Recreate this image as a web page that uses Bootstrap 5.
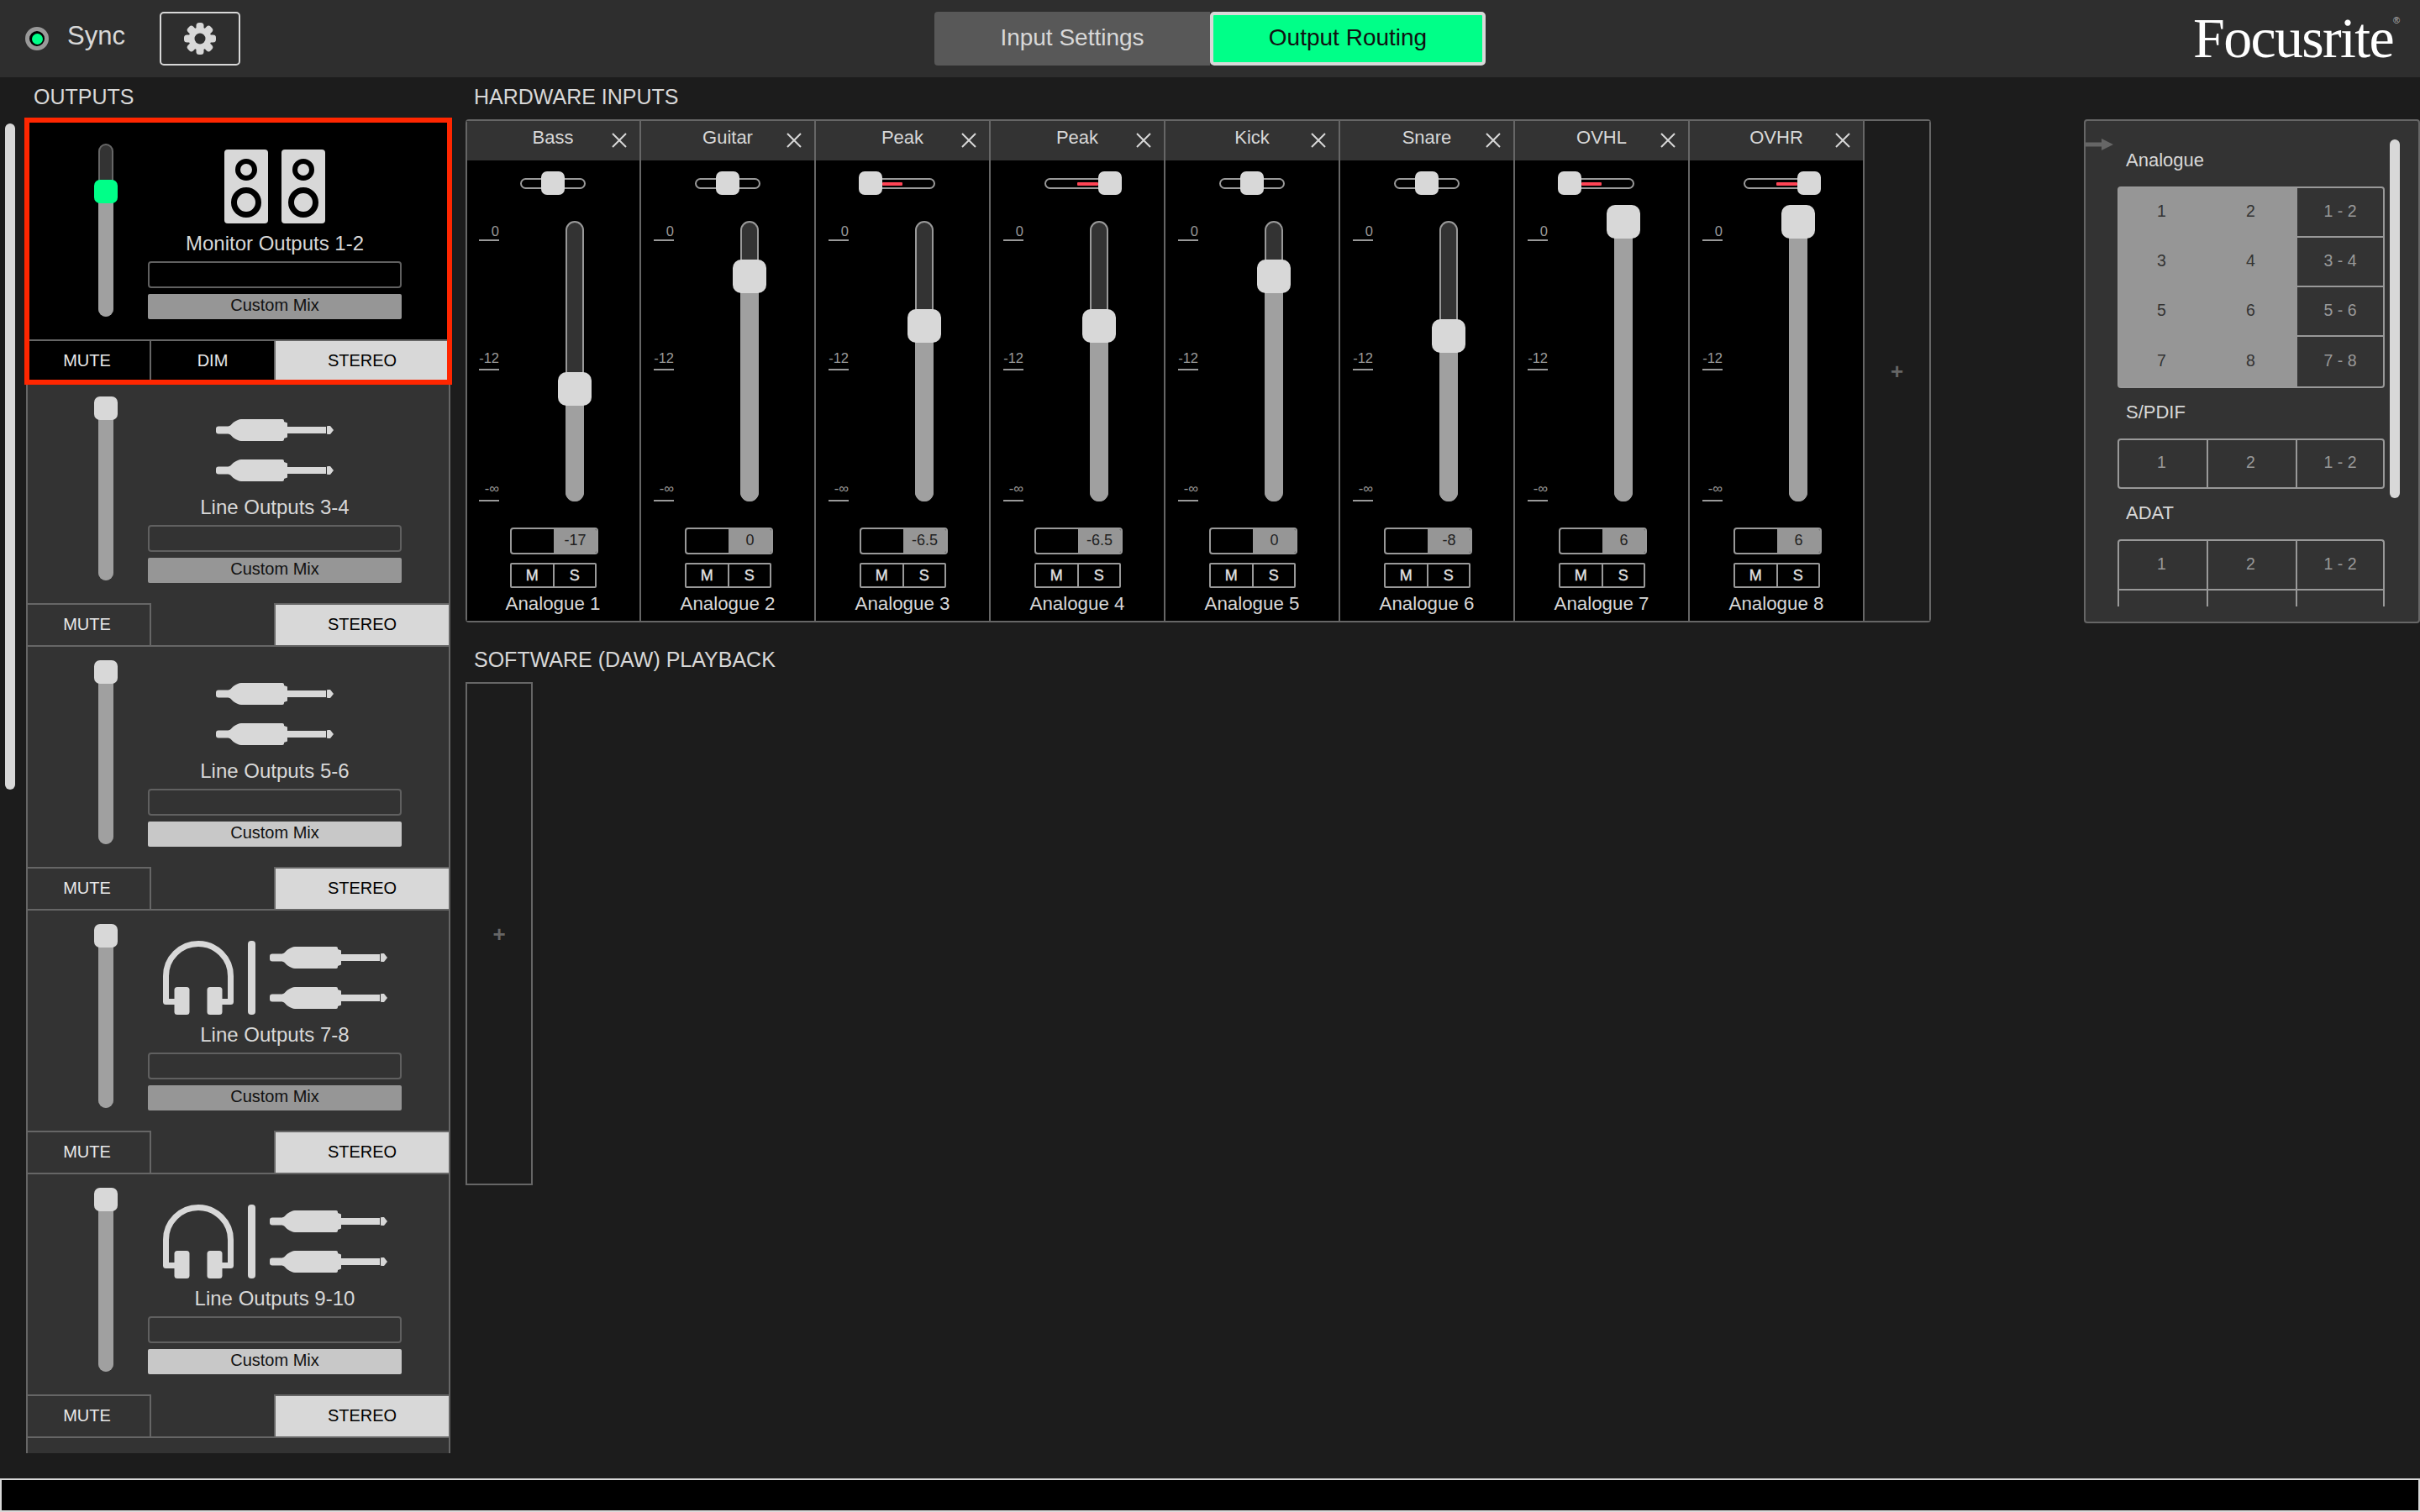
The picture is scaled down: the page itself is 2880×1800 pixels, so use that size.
<!DOCTYPE html>
<html lang="en">
<head>
<meta charset="utf-8">
<title>Focusrite Control</title>
<link href="https://cdn.jsdelivr.net/npm/bootstrap@5.3.0/dist/css/bootstrap.min.css" rel="stylesheet">
<style>
html,body{margin:0;background:#1c1c1c;}
body{font-family:"Liberation Sans",Arial,sans-serif;color:#d8d8d8;overflow:hidden;}
.app-shell{width:2880px;height:1800px;}
.top-bar{height:92px;background:#2e2e2e;flex:none;}
.led{width:28px;height:28px;border-radius:50%;border:5px solid #999;background:#000;margin-left:30px;}
.led i{display:block;width:13px;height:13px;border-radius:50%;background:#00ff88;}
.sync-text{font-size:31px;margin-left:22px;line-height:40px;margin-top:-6px;width:70px;}
.gear-btn{width:96px;height:64px;margin-left:40px;padding:0;border:2px solid #d8d8d8;border-radius:5px;background:transparent;}
.tabs{margin-left:826px;}
.tab-btn{width:328px;height:64px;padding:0 0 2px;font-size:28px;border:0;color:#d8d8d8;background:#585858;border-radius:4px 0 0 4px;}
.tab-on{background:#00ff88;color:#111;border:4px solid #d8d8d8;border-radius:5px;}
.logo-mark{font-family:"Liberation Serif",serif;font-size:68px;letter-spacing:-1.7px;color:#fff;line-height:60px;margin-right:24px;margin-top:-2px;}
.logo-mark sup{font-family:"Liberation Sans",sans-serif;font-size:11px;letter-spacing:0;top:-40px;color:#bbb;margin-left:0;}
.main-area{flex:1;min-height:0;}
.out-col{width:555px;flex:none;}
.sec-title{font-size:25px;line-height:46px;height:48px;padding-left:40px;}
.side-thumb{width:12px;height:793px;margin:7px 0 0 6px;background:#d8d8d8;border-radius:6px;flex:none;}
.out-list{width:509px;height:1590px;margin-left:11px;padding:2px;overflow:hidden;flex:none;}
.out-card{position:relative;height:314px;width:505px;background:#333;border:2px solid #666;border-top:0;}
.out-card.stub{height:30px;}
.out-card.picked{background:#000;z-index:1;}
.out-card.picked::after{content:"";position:absolute;inset:-2px -4px -4px -4px;border:6px solid #ff2600;pointer-events:none;}
.out-top{height:262px;}
.out-fader{position:relative;width:18px;height:206px;margin:29px 0 0 84px;background:#333;border:2px solid #666;border-radius:9px;flex:none;}
.fader-fill{position:absolute;left:-2px;right:-2px;bottom:-2px;background:#a0a0a0;}
.out-fader .fader-fill{border-radius:0 0 9px 9px;}
.out-knob{position:absolute;left:-7px;width:28px;height:28px;background:#d8d8d8;border-radius:7px;}
.knob-live{background:#00ff88;}
.out-body{width:302px;margin:36px 0 0 41px;flex:none;}
.out-art{height:88px;}
.hp-bar{margin:0 17px;flex:none;}
.out-name{font-size:24px;line-height:45px;height:45px;text-align:center;white-space:nowrap;padding-top:1px;}
.name-field{height:32px;border:2px solid #606060;border-radius:4px;}
.mix-tag{height:30px;margin-top:7px;background:#969696;color:#111;font-size:20px;line-height:27px;text-align:center;border-radius:2px;}
.mix-on{background:#c8c8c8;}
.out-foot{height:50px;}
.foot-btn{font-size:20px;padding:0 0 2px;border:0;border-radius:0;color:#e8e8e8;background:transparent;height:50px;}
.foot-mute{width:147px;padding-right:4px;border-top:2px solid #666;border-right:2px solid #666;}
.foot-mid{width:146px;}
.foot-dim{border-top:2px solid #666;}
.foot-stereo{flex:1;background:#d8d8d8;color:#000;border-top:2px solid #666;border-left:2px solid #666;}
.jack-stack{gap:22px;padding-top:7px;}
.mid-col{width:1925px;flex:none;}
.mid-title{font-size:25px;line-height:46px;height:50px;padding-left:9px;white-space:nowrap;}
.mid-title-2{margin-top:21px;}
.strip-panel{position:relative;width:1744px;height:599px;margin-left:-1px;padding-left:1px;border-top:2px solid #666;border-bottom:2px solid #666;border-radius:4px;overflow:hidden;}
.strip-panel::before{content:"";position:absolute;left:0;top:0;bottom:0;width:2px;background:#666;z-index:2;}
.strip{width:208px;flex:none;background:#000;border-right:2px solid #666;}
.strip-head{height:47px;background:#333;}
.strip-name{flex:1;font-size:22px;text-align:center;padding-left:33px;line-height:40px;}
.strip-x{margin:14px 15px 0 0;flex:none;display:block;}
.pan{position:relative;width:78px;height:13px;margin:21px 0 0 64px;border:2px solid #999;border-radius:7px;}
.pan-knob{position:absolute;top:-10px;width:28px;height:28px;background:#d8d8d8;border-radius:7px;}
.pan-red{position:absolute;top:2.5px;height:4px;background:#ff4455;border-radius:1px;}
.fader-row{margin:38px 0 0 15px;height:334px;}
.scale{width:24px;flex:none;}
.tick{height:154px;display:flex;align-items:flex-end;justify-content:flex-end;border-bottom:2px solid #999;color:#999;font-size:16.5px;line-height:20px;padding-bottom:3px;}
.tick-top{height:24px;padding-bottom:0;}
.tick-low{height:156px;padding-bottom:4px;}
.strip-fader{position:relative;width:22px;height:334px;margin-left:79px;background:#333;border:2px solid #999;border-radius:11px;flex:none;}
.strip-fader .fader-fill{border-radius:0 0 11px 11px;}
.strip-knob{position:absolute;left:-11px;width:40px;height:40px;background:#d8d8d8;border-radius:10px;}
.value-box{width:105px;height:32px;margin:31px 0 0 52px;border:2px solid #999;border-radius:4px;overflow:hidden;}
.value-gap{width:50px;flex:none;}
.value-num{flex:1;background:#969696;color:#222;font-size:18px;line-height:26px;text-align:center;}
.ms-box{width:103px;height:30px;margin:10px 0 0 52px;border:2px solid #999;border-radius:2px;}
.ms-cell{flex:1;font-size:18px;line-height:26px;text-align:center;color:#e4e4e4;-webkit-text-stroke:.35px #e4e4e4;}
.ms-cell+.ms-cell{border-left:2px solid #999;}
.strip-label{font-size:22.3px;line-height:26px;margin-top:6px;text-align:center;white-space:nowrap;}
.add-box{width:79px;flex:none;background:#1c1c1c;border-right:2px solid #666;}
.plus-sign{color:#666;font-size:26px;line-height:26px;font-weight:700;}
.daw-box{width:80px;height:599px;margin-left:-1px;border:2px solid #666;}
.route-panel{position:relative;width:400px;height:600px;margin-top:50px;background:#333;border:2px solid #666;border-radius:4px;flex:none;}
.route-arrow{position:absolute;left:0;top:21px;display:block;}
.route-scroll{width:362px;height:578px;padding:34px 6px 0 38px;overflow:hidden;flex:none;}
.route-thumb{width:12px;height:427px;margin-top:22px;background:#d8d8d8;border-radius:6px;flex:none;}
.route-head{font-size:22px;line-height:26px;margin:16px 0 18px 10px;}
.route-head-first{margin-top:0;}
.route-grid{display:grid;grid-template-columns:106px 106px 102px;grid-auto-rows:59px;width:318px;border:2px solid #999;border-radius:4px;}
.route-grid.one-row{grid-auto-rows:56px;}
.route-grid.open{border-bottom:0;}
.rcell{display:flex;align-items:center;justify-content:center;font-size:19.5px;color:#999;border-right:2px solid #999;border-bottom:2px solid #999;padding:0 3px 2px 0;}
.rcell:nth-child(3n){border-right:0;padding-right:0;}
.one-row .rcell{border-bottom:0;}
.rcell.on{background:#969696;color:#333;border-color:#969696;}
.route-grid.lit .rcell:nth-last-child(-n+3){border-bottom:0;}
.foot-bar{height:40px;flex:none;background:#000;border:2px solid #d8d8d8;}
</style>
</head>
<body>
<svg width="0" height="0" class="position-absolute">
  <defs>
    <symbol id="jack" viewBox="0 0 140 26">
      <rect x="0" y="8.5" width="18" height="9" rx="3" fill="#d8d8d8"/>
      <path d="M15 8.5C18 8 20 3 26 1Q28 0 30 0H79Q81 0 81 2V3L85 4.5V21.5L81 23V24Q81 26 79 26H30Q28 26 26 25C20 23 18 18 15 17.5Z" fill="#d8d8d8"/>
      <rect x="84" y="9" width="47" height="8" fill="#d8d8d8"/>
      <path d="M132 8.5L133 8H136L140 13L136 18H133L132 17.5Z" fill="#d8d8d8"/>
    </symbol>
    <symbol id="phones" viewBox="0 0 84 88">
      <path d="M14 72.5H3.5V42A38.5 38.5 0 0 1 80.5 42V72.5H70" fill="none" stroke="#d8d8d8" stroke-width="7" stroke-linejoin="round"/>
      <rect x="13.5" y="55" width="18" height="33" rx="3.5" fill="#d8d8d8"/>
      <rect x="52.5" y="55" width="18" height="33" rx="3.5" fill="#d8d8d8"/>
    </symbol>
    <symbol id="speaker" viewBox="0 0 52 88">
      <rect width="52" height="88" rx="4" fill="#d8d8d8"/>
      <circle cx="26" cy="24" r="10" fill="none" stroke="#000" stroke-width="6"/>
      <circle cx="26" cy="63" r="14.5" fill="none" stroke="#000" stroke-width="7"/>
    </symbol>
    <symbol id="cross" viewBox="0 0 18 18">
      <path d="M1 1L17 17M17 1L1 17" fill="none" stroke="#d8d8d8" stroke-width="2"/>
    </symbol>
  </defs>
</svg>
<div class="app-shell d-flex flex-column">
  <header class="top-bar d-flex align-items-center">
    <span class="led d-flex align-items-center justify-content-center"><i></i></span>
    <span class="sync-text">Sync</span>
    <button class="btn gear-btn d-flex align-items-center justify-content-center" type="button" aria-label="Settings">
      <svg width="38" height="38" viewBox="-19 -19 38 38" fill="#d8d8d8">
        <circle r="13.5"/>
        <rect x="-4.5" y="-19" width="9" height="10" rx="3.5"/>
        <rect x="-4.5" y="-19" width="9" height="10" rx="3.5" transform="rotate(45)"/>
        <rect x="-4.5" y="-19" width="9" height="10" rx="3.5" transform="rotate(90)"/>
        <rect x="-4.5" y="-19" width="9" height="10" rx="3.5" transform="rotate(135)"/>
        <rect x="-4.5" y="-19" width="9" height="10" rx="3.5" transform="rotate(180)"/>
        <rect x="-4.5" y="-19" width="9" height="10" rx="3.5" transform="rotate(225)"/>
        <rect x="-4.5" y="-19" width="9" height="10" rx="3.5" transform="rotate(270)"/>
        <rect x="-4.5" y="-19" width="9" height="10" rx="3.5" transform="rotate(315)"/>
        <circle r="6.5" fill="#2e2e2e"/>
      </svg>
    </button>
    <div class="tabs d-flex">
      <button class="btn tab-btn" type="button">Input Settings</button>
      <button class="btn tab-btn tab-on" type="button">Output Routing</button>
    </div>
    <div class="logo-mark ms-auto">Focusrite<sup>®</sup></div>
  </header>

  <main class="main-area d-flex">
    <section class="out-col">
      <div class="sec-title">OUTPUTS</div>
      <div class="d-flex">
        <div class="side-thumb"></div>
        <div class="out-list">

          <div class="out-card picked">
            <div class="out-top d-flex">
              <div class="out-fader"><div class="fader-fill" style="height:149px"></div><div class="out-knob knob-live" style="top:41px"></div></div>
              <div class="out-body">
                <div class="out-art d-flex justify-content-center gap-3">
                  <svg width="52" height="88"><use href="#speaker"/></svg>
                  <svg width="52" height="88"><use href="#speaker"/></svg>
                </div>
                <div class="out-name">Monitor Outputs 1-2</div>
                <div class="name-field"></div>
                <div class="mix-tag">Custom Mix</div>
              </div>
            </div>
            <div class="out-foot d-flex">
              <button class="btn foot-btn foot-mute" type="button">MUTE</button>
              <button class="btn foot-btn foot-mid foot-dim" type="button">DIM</button>
              <button class="btn foot-btn foot-stereo" type="button">STEREO</button>
            </div>
          </div>

          <div class="out-card">
            <div class="out-top d-flex">
              <div class="out-fader"><div class="fader-fill" style="height:205px"></div><div class="out-knob" style="top:-15px"></div></div>
              <div class="out-body">
                <div class="out-art d-flex flex-column align-items-center jack-stack">
                  <svg width="140" height="26"><use href="#jack"/></svg>
                  <svg width="140" height="26"><use href="#jack"/></svg>
                </div>
                <div class="out-name">Line Outputs 3-4</div>
                <div class="name-field"></div>
                <div class="mix-tag">Custom Mix</div>
              </div>
            </div>
            <div class="out-foot d-flex">
              <button class="btn foot-btn foot-mute" type="button">MUTE</button>
              <div class="foot-mid"></div>
              <button class="btn foot-btn foot-stereo" type="button">STEREO</button>
            </div>
          </div>

          <div class="out-card">
            <div class="out-top d-flex">
              <div class="out-fader"><div class="fader-fill" style="height:205px"></div><div class="out-knob" style="top:-15px"></div></div>
              <div class="out-body">
                <div class="out-art d-flex flex-column align-items-center jack-stack">
                  <svg width="140" height="26"><use href="#jack"/></svg>
                  <svg width="140" height="26"><use href="#jack"/></svg>
                </div>
                <div class="out-name">Line Outputs 5-6</div>
                <div class="name-field"></div>
                <div class="mix-tag mix-on">Custom Mix</div>
              </div>
            </div>
            <div class="out-foot d-flex">
              <button class="btn foot-btn foot-mute" type="button">MUTE</button>
              <div class="foot-mid"></div>
              <button class="btn foot-btn foot-stereo" type="button">STEREO</button>
            </div>
          </div>

          <div class="out-card">
            <div class="out-top d-flex">
              <div class="out-fader"><div class="fader-fill" style="height:205px"></div><div class="out-knob" style="top:-15px"></div></div>
              <div class="out-body">
                <div class="out-art d-flex justify-content-center">
                  <svg width="84" height="88"><use href="#phones"/></svg>
                  <svg class="hp-bar" width="9" height="88"><rect width="9" height="88" rx="4" fill="#d8d8d8"/></svg>
                  <div class="d-flex flex-column jack-stack">
                    <svg width="140" height="26"><use href="#jack"/></svg>
                    <svg width="140" height="26"><use href="#jack"/></svg>
                  </div>
                </div>
                <div class="out-name">Line Outputs 7-8</div>
                <div class="name-field"></div>
                <div class="mix-tag">Custom Mix</div>
              </div>
            </div>
            <div class="out-foot d-flex">
              <button class="btn foot-btn foot-mute" type="button">MUTE</button>
              <div class="foot-mid"></div>
              <button class="btn foot-btn foot-stereo" type="button">STEREO</button>
            </div>
          </div>

          <div class="out-card">
            <div class="out-top d-flex">
              <div class="out-fader"><div class="fader-fill" style="height:205px"></div><div class="out-knob" style="top:-15px"></div></div>
              <div class="out-body">
                <div class="out-art d-flex justify-content-center">
                  <svg width="84" height="88"><use href="#phones"/></svg>
                  <svg class="hp-bar" width="9" height="88"><rect width="9" height="88" rx="4" fill="#d8d8d8"/></svg>
                  <div class="d-flex flex-column jack-stack">
                    <svg width="140" height="26"><use href="#jack"/></svg>
                    <svg width="140" height="26"><use href="#jack"/></svg>
                  </div>
                </div>
                <div class="out-name">Line Outputs 9-10</div>
                <div class="name-field"></div>
                <div class="mix-tag mix-on">Custom Mix</div>
              </div>
            </div>
            <div class="out-foot d-flex">
              <button class="btn foot-btn foot-mute" type="button">MUTE</button>
              <div class="foot-mid"></div>
              <button class="btn foot-btn foot-stereo" type="button">STEREO</button>
            </div>
          </div>

          <div class="out-card stub"></div>
        </div>
      </div>
    </section>

    <section class="mid-col">
      <div class="mid-title">HARDWARE INPUTS</div>
      <div class="strip-panel d-flex">

        <div class="strip">
          <div class="strip-head d-flex"><span class="strip-name">Bass</span><svg class="strip-x" width="18" height="18"><use href="#cross"/></svg></div>
          <div class="pan"><div class="pan-knob" style="left:23px"></div></div>
          <div class="fader-row d-flex">
            <div class="scale"><div class="tick tick-top">0</div><div class="tick">-12</div><div class="tick tick-low">-∞</div></div>
            <div class="strip-fader"><div class="fader-fill" style="height:134px"></div><div class="strip-knob" style="top:178px"></div></div>
          </div>
          <div class="value-box d-flex"><div class="value-gap"></div><div class="value-num">-17</div></div>
          <div class="ms-box d-flex"><div class="ms-cell">M</div><div class="ms-cell">S</div></div>
          <div class="strip-label">Analogue 1</div>
        </div>

        <div class="strip">
          <div class="strip-head d-flex"><span class="strip-name">Guitar</span><svg class="strip-x" width="18" height="18"><use href="#cross"/></svg></div>
          <div class="pan"><div class="pan-knob" style="left:23px"></div></div>
          <div class="fader-row d-flex">
            <div class="scale"><div class="tick tick-top">0</div><div class="tick">-12</div><div class="tick tick-low">-∞</div></div>
            <div class="strip-fader"><div class="fader-fill" style="height:268px"></div><div class="strip-knob" style="top:44px"></div></div>
          </div>
          <div class="value-box d-flex"><div class="value-gap"></div><div class="value-num">0</div></div>
          <div class="ms-box d-flex"><div class="ms-cell">M</div><div class="ms-cell">S</div></div>
          <div class="strip-label">Analogue 2</div>
        </div>

        <div class="strip">
          <div class="strip-head d-flex"><span class="strip-name">Peak</span><svg class="strip-x" width="18" height="18"><use href="#cross"/></svg></div>
          <div class="pan"><div class="pan-red" style="left:13px;width:24px"></div><div class="pan-knob" style="left:-15px"></div></div>
          <div class="fader-row d-flex">
            <div class="scale"><div class="tick tick-top">0</div><div class="tick">-12</div><div class="tick tick-low">-∞</div></div>
            <div class="strip-fader"><div class="fader-fill" style="height:209px"></div><div class="strip-knob" style="top:103px"></div></div>
          </div>
          <div class="value-box d-flex"><div class="value-gap"></div><div class="value-num">-6.5</div></div>
          <div class="ms-box d-flex"><div class="ms-cell">M</div><div class="ms-cell">S</div></div>
          <div class="strip-label">Analogue 3</div>
        </div>

        <div class="strip">
          <div class="strip-head d-flex"><span class="strip-name">Peak</span><svg class="strip-x" width="18" height="18"><use href="#cross"/></svg></div>
          <div class="pan"><div class="pan-red" style="left:37px;width:25px"></div><div class="pan-knob" style="left:62px"></div></div>
          <div class="fader-row d-flex">
            <div class="scale"><div class="tick tick-top">0</div><div class="tick">-12</div><div class="tick tick-low">-∞</div></div>
            <div class="strip-fader"><div class="fader-fill" style="height:209px"></div><div class="strip-knob" style="top:103px"></div></div>
          </div>
          <div class="value-box d-flex"><div class="value-gap"></div><div class="value-num">-6.5</div></div>
          <div class="ms-box d-flex"><div class="ms-cell">M</div><div class="ms-cell">S</div></div>
          <div class="strip-label">Analogue 4</div>
        </div>

        <div class="strip">
          <div class="strip-head d-flex"><span class="strip-name">Kick</span><svg class="strip-x" width="18" height="18"><use href="#cross"/></svg></div>
          <div class="pan"><div class="pan-knob" style="left:23px"></div></div>
          <div class="fader-row d-flex">
            <div class="scale"><div class="tick tick-top">0</div><div class="tick">-12</div><div class="tick tick-low">-∞</div></div>
            <div class="strip-fader"><div class="fader-fill" style="height:268px"></div><div class="strip-knob" style="top:44px"></div></div>
          </div>
          <div class="value-box d-flex"><div class="value-gap"></div><div class="value-num">0</div></div>
          <div class="ms-box d-flex"><div class="ms-cell">M</div><div class="ms-cell">S</div></div>
          <div class="strip-label">Analogue 5</div>
        </div>

        <div class="strip">
          <div class="strip-head d-flex"><span class="strip-name">Snare</span><svg class="strip-x" width="18" height="18"><use href="#cross"/></svg></div>
          <div class="pan"><div class="pan-knob" style="left:23px"></div></div>
          <div class="fader-row d-flex">
            <div class="scale"><div class="tick tick-top">0</div><div class="tick">-12</div><div class="tick tick-low">-∞</div></div>
            <div class="strip-fader"><div class="fader-fill" style="height:197px"></div><div class="strip-knob" style="top:115px"></div></div>
          </div>
          <div class="value-box d-flex"><div class="value-gap"></div><div class="value-num">-8</div></div>
          <div class="ms-box d-flex"><div class="ms-cell">M</div><div class="ms-cell">S</div></div>
          <div class="strip-label">Analogue 6</div>
        </div>

        <div class="strip">
          <div class="strip-head d-flex"><span class="strip-name">OVHL</span><svg class="strip-x" width="18" height="18"><use href="#cross"/></svg></div>
          <div class="pan"><div class="pan-red" style="left:13px;width:24px"></div><div class="pan-knob" style="left:-15px"></div></div>
          <div class="fader-row d-flex">
            <div class="scale"><div class="tick tick-top">0</div><div class="tick">-12</div><div class="tick tick-low">-∞</div></div>
            <div class="strip-fader"><div class="fader-fill" style="height:333px"></div><div class="strip-knob" style="top:-21px"></div></div>
          </div>
          <div class="value-box d-flex"><div class="value-gap"></div><div class="value-num">6</div></div>
          <div class="ms-box d-flex"><div class="ms-cell">M</div><div class="ms-cell">S</div></div>
          <div class="strip-label">Analogue 7</div>
        </div>

        <div class="strip">
          <div class="strip-head d-flex"><span class="strip-name">OVHR</span><svg class="strip-x" width="18" height="18"><use href="#cross"/></svg></div>
          <div class="pan"><div class="pan-red" style="left:37px;width:25px"></div><div class="pan-knob" style="left:62px"></div></div>
          <div class="fader-row d-flex">
            <div class="scale"><div class="tick tick-top">0</div><div class="tick">-12</div><div class="tick tick-low">-∞</div></div>
            <div class="strip-fader"><div class="fader-fill" style="height:333px"></div><div class="strip-knob" style="top:-21px"></div></div>
          </div>
          <div class="value-box d-flex"><div class="value-gap"></div><div class="value-num">6</div></div>
          <div class="ms-box d-flex"><div class="ms-cell">M</div><div class="ms-cell">S</div></div>
          <div class="strip-label">Analogue 8</div>
        </div>

        <div class="add-box d-flex align-items-center justify-content-center"><span class="plus-sign">+</span></div>
      </div>

      <div class="mid-title mid-title-2">SOFTWARE (DAW) PLAYBACK</div>
      <div class="daw-box d-flex align-items-center justify-content-center"><span class="plus-sign">+</span></div>
    </section>

    <aside class="route-panel d-flex">
      <svg class="route-arrow" width="34" height="14"><path d="M0 4.5H19V0L33 7L19 14V9.5H0Z" fill="#666"/></svg>
      <div class="route-scroll">
        <div class="route-head route-head-first">Analogue</div>
        <div class="route-grid lit">
          <div class="rcell on">1</div><div class="rcell on">2</div><div class="rcell">1 - 2</div>
          <div class="rcell on">3</div><div class="rcell on">4</div><div class="rcell">3 - 4</div>
          <div class="rcell on">5</div><div class="rcell on">6</div><div class="rcell">5 - 6</div>
          <div class="rcell on">7</div><div class="rcell on">8</div><div class="rcell">7 - 8</div>
        </div>
        <div class="route-head">S/PDIF</div>
        <div class="route-grid one-row">
          <div class="rcell">1</div><div class="rcell">2</div><div class="rcell">1 - 2</div>
        </div>
        <div class="route-head">ADAT</div>
        <div class="route-grid open">
          <div class="rcell">1</div><div class="rcell">2</div><div class="rcell">1 - 2</div>
          <div class="rcell"></div><div class="rcell"></div><div class="rcell"></div>
        </div>
      </div>
      <div class="route-thumb"></div>
    </aside>
  </main>

  <div class="foot-bar"></div>
</div>
<script src="https://cdn.jsdelivr.net/npm/bootstrap@5.3.0/dist/js/bootstrap.bundle.min.js"></script>
</body>
</html>
